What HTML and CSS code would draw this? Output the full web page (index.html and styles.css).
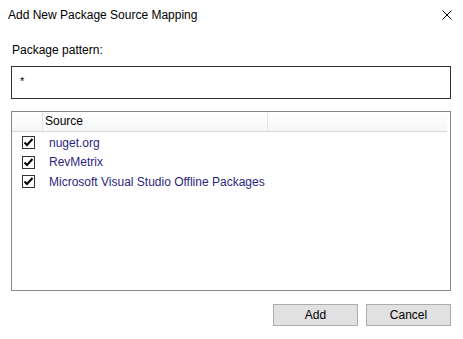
FILE: index.html
```html
<!DOCTYPE html>
<html lang="en">
<head>
  <meta charset="UTF-8" />
  <title>Add New Package Source Mapping</title>
  <link rel="stylesheet" href="styles.css">
</head>
<body>

  <div class="dialog">
    <header class="titlebar">
      <span class="title">Add New Package Source Mapping</span>
      <button class="close" title="Close">
        <svg width="10" height="10" viewBox="0 0 10 10"><path d="M0.5 0.5 L9.5 9.5 M9.5 0.5 L0.5 9.5" stroke="#000" stroke-width="1" fill="none"/></svg>
      </button>
    </header>

    <div class="content">
      <label class="field-label">Package pattern:</label>
      <div class="pattern-box">*</div>

      <div class="list">
        <div class="list-head">
          <div class="col col-check"></div>
          <div class="col col-source">Source</div>
          <div class="col col-rest"></div>
        </div>
        <div class="row">
          <span class="check"><svg width="11" height="11" viewBox="0 0 11 11"><path d="M1.5 5.5 L4 8 L9.5 2" stroke="#000" stroke-width="2" fill="none"/></svg></span>
          <span class="name">nuget.org</span>
        </div>
        <div class="row">
          <span class="check"><svg width="11" height="11" viewBox="0 0 11 11"><path d="M1.5 5.5 L4 8 L9.5 2" stroke="#000" stroke-width="2" fill="none"/></svg></span>
          <span class="name">RevMetrix</span>
        </div>
        <div class="row">
          <span class="check"><svg width="11" height="11" viewBox="0 0 11 11"><path d="M1.5 5.5 L4 8 L9.5 2" stroke="#000" stroke-width="2" fill="none"/></svg></span>
          <span class="name">Microsoft Visual Studio Offline Packages</span>
        </div>
      </div>

      <div class="buttons">
        <button class="btn">Add</button>
        <button class="btn">Cancel</button>
      </div>
    </div>
  </div>

</body>
</html>
```

FILE: styles.css
```css
* { box-sizing: border-box; margin: 0; padding: 0; }
body {
  background: #fff;
  font-family: "Liberation Sans", Arial, sans-serif;
  font-size: 12px;
  color: #000;
}
.dialog {
  width: 463px;
  height: 339px;
  background: #fff;
}
.titlebar {
  display: flex;
  align-items: center;
  justify-content: space-between;
  height: 30px;
  padding: 0 8px 0 8px;
}
.title {
  font-size: 12px;
}
.close {
  background: none;
  border: none;
  width: 12px;
  height: 12px;
  display: flex;
  align-items: center;
  justify-content: center;
  margin-right: 2px;
}
.content {
  padding: 13px 12px 0 11px;
}
.field-label {
  display: block;
  height: 23px;
  padding-left: 1px;
}
.pattern-box {
  height: 33px;
  border: 1px solid #333;
  padding: 8px 0 0 8px;
  font-size: 11px;
}
.list {
  margin-top: 12px;
  height: 180px;
  border: 1px solid #828790;
  padding: 0 3px 0 0;
}
.list-head {
  display: flex;
  height: 20px;
  background: linear-gradient(to bottom, #fff, #f6f7f8);
  border-bottom: 1px solid #d5d5d5;
  margin-bottom: 1px;
}
.col {
  border-right: 1px solid #e3e5e7;
  line-height: 19px;
}
.col-check { width: 31px; }
.col-source { width: 225px; padding-left: 2px; }
.col-rest { flex: 1; border-right: none; }
.row {
  display: flex;
  align-items: center;
  height: 19.5px;
  padding-left: 10px;
}
.check {
  display: flex;
  width: 13px;
  height: 13px;
  border: 1px solid #333;
  background: #fff;
  margin-right: 14px;
}
.name {
  color: #2b1f7e;
}
.buttons {
  display: flex;
  justify-content: flex-end;
  gap: 8px;
  margin-top: 13px;
}
.btn {
  width: 85px;
  height: 22px;
  background: #e1e1e1;
  border: 1px solid #adadad;
  font-family: inherit;
  font-size: 12px;
  color: #000;
}
```
